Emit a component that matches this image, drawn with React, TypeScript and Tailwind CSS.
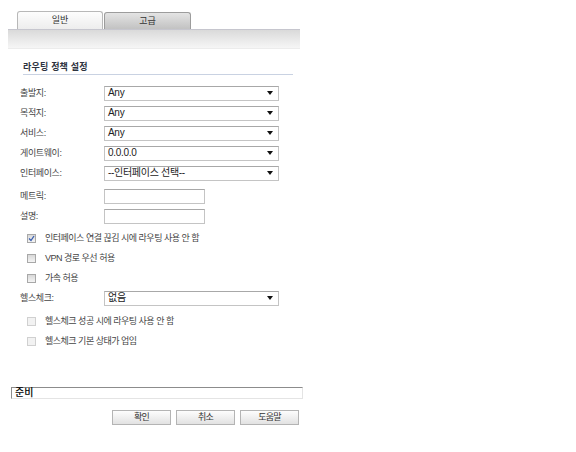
import React from "react";

const font = { fontFamily: '"Liberation Sans", "Noto Sans CJK KR", sans-serif' };

function Select({ value, width = "w-[175px]" }: { value: string; width?: string }) {
  return (
    <div className={`${width} h-[15px] border border-[#c4c4c4] border-t-[#a8a8a8] bg-white flex items-center justify-between pl-[3px] pr-[5px] text-[10px] text-[#222] leading-none`}>
      <span className="tracking-[-0.3px]">{value}</span>
      <svg width="6" height="4" viewBox="0 0 6 4"><path d="M0 0H6L3 4Z" fill="#111" /></svg>
    </div>
  );
}

function Input() {
  return <div className="w-[101px] h-[15px] border border-[#c4c4c4] border-t-[#a8a8a8] bg-white" />;
}

function Row({ label, children }: { label: string; children: React.ReactNode }) {
  return (
    <div className="flex items-center h-[20px]">
      <div className="w-[104px] pl-[20px] box-border text-[9px] tracking-[-0.4px] text-[#444] leading-none shrink-0 pt-[1px]">{label}</div>
      {children}
    </div>
  );
}

function Check({ label, checked = false, light = false }: { label: string; checked?: boolean; light?: boolean }) {
  return (
    <div className="flex items-center h-[20px] pl-[27px]">
      <div
        className={`w-[9px] h-[9px] border flex items-center justify-center ${
          light ? "border-[#d0d0d0] bg-[#f2f2f2]" : "border-[#a8a8a8] bg-gradient-to-b from-[#d8d8d8] to-[#f4f4f4]"
        }`}
      >
        {checked && (
          <svg width="7" height="7" viewBox="0 0 7 7">
            <path d="M1 3.5L3 5.5L6 1" stroke="#3a5fb0" strokeWidth="1.3" fill="none" />
          </svg>
        )}
      </div>
      <span className="ml-[9px] text-[9px] tracking-[-0.5px] text-[#444] leading-none">{label}</span>
    </div>
  );
}

function Btn({ label }: { label: string }) {
  return (
    <div className="w-[59px] h-[15px] border border-[#b4b4b4] bg-gradient-to-b from-[#fdfdfd] to-[#e2e2e2] flex items-center justify-center text-[9px] tracking-[-0.8px] text-[#333] leading-none">
      {label}
    </div>
  );
}

export default function App() {
  return (
    <div className="w-[576px] h-[452px] bg-white overflow-hidden" style={font}>
      <div className="h-[29px] pl-[17px] flex items-end">
        <div className="w-[86px] h-[18px] border border-b-0 border-[#b8b8b8] rounded-t-[3px] bg-gradient-to-b from-[#fdfdfd] to-[#ededed] flex items-center justify-center text-[9px] text-[#333] leading-none">
          일반
        </div>
        <div className="ml-[1px] w-[87px] h-[17px] border border-b-0 border-[#9c9c9c] rounded-t-[3px] bg-gradient-to-b from-[#e4e4e4] to-[#c2c2c2] flex items-center justify-center text-[9px] text-[#333] leading-none">
          고급
        </div>
      </div>
      <div className="ml-[8px] w-[292px] h-[20px] border-t border-[#c6c6ce] bg-gradient-to-b from-[#dadada] to-[#f6f6f6] border-b border-b-[#ececec]" />

      <div className="ml-[23px] mt-[12px] w-[270px] h-[14px] border-b border-[#c9d2e2] text-[9px] font-bold tracking-[0.2px] text-[#2d3340] leading-none pt-[2px]">
        라우팅 정책 설정
      </div>

      <div className="mt-[8px]">
        <Row label="출발지:"><Select value="Any" /></Row>
        <Row label="목적지:"><Select value="Any" /></Row>
        <Row label="서비스:"><Select value="Any" /></Row>
        <Row label="게이트웨이:"><Select value="0.0.0.0" /></Row>
        <Row label="인터페이스:"><Select value="--인터페이스 선택--" /></Row>
      </div>
      <div className="mt-[3px]">
        <Row label="메트릭:"><Input /></Row>
        <Row label="설명:"><Input /></Row>
      </div>
      <div className="mt-[2px]">
        <Check label="인터페이스 연결 끊김 시에 라우팅 사용 안 함" checked />
        <Check label="VPN 경로 우선 허용" />
        <Check label="가속 허용" />
        <Row label="헬스체크:"><Select value="없음" /></Row>
      </div>
      <div className="mt-[3px]">
        <Check label="헬스체크 성공 시에 라우팅 사용 안 함" light />
        <Check label="헬스체크 기본 상태가 업임" light />
      </div>

      <div className="ml-[11px] mt-[36px] w-[292px] h-[12px] border-t border-l border-[#8c8c8c] border-r border-b border-r-[#e4e4e4] border-b-[#e4e4e4] flex items-center pl-[3px] text-[10px] font-medium text-black leading-none">
        준비
      </div>

      <div className="ml-[112px] mt-[11px] flex gap-[5px]">
        <Btn label="확인" />
        <Btn label="취소" />
        <Btn label="도움말" />
      </div>
    </div>
  );
}
